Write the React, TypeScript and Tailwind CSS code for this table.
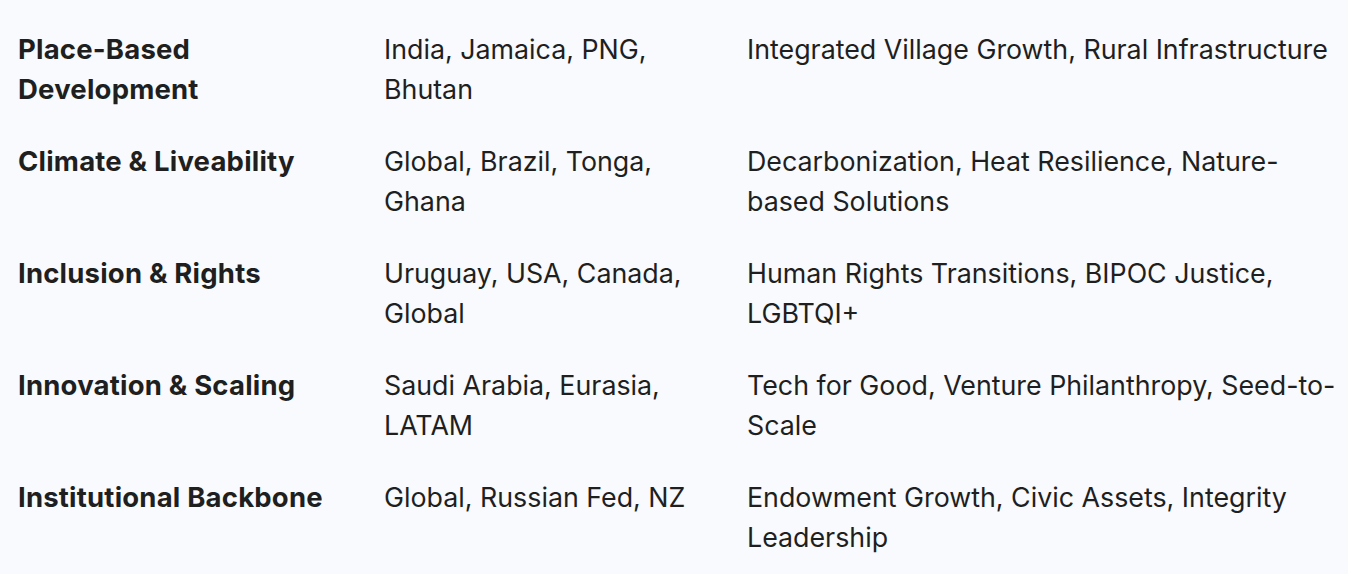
const rows = [
  {
    area: "Place-Based Development",
    regions: "India, Jamaica, PNG, Bhutan",
    focus: "Integrated Village Growth, Rural Infrastructure",
  },
  {
    area: "Climate & Liveability",
    regions: "Global, Brazil, Tonga, Ghana",
    focus: "Decarbonization, Heat Resilience, Nature-based Solutions",
  },
  {
    area: "Inclusion & Rights",
    regions: "Uruguay, USA, Canada, Global",
    focus: "Human Rights Transitions, BIPOC Justice, LGBTQI+",
  },
  {
    area: "Innovation & Scaling",
    regions: "Saudi Arabia, Eurasia, LATAM",
    focus: "Tech for Good, Venture Philanthropy, Seed-to-Scale",
  },
  {
    area: "Institutional Backbone",
    regions: "Global, Russian Fed, NZ",
    focus: "Endowment Growth, Civic Assets, Integrity Leadership",
  },
];

const App = () => {
  return (
    <div className="min-h-[574px] w-[1348px] overflow-hidden bg-[#f8fafd] pt-[13px] font-['Inter',sans-serif] text-[26.8px] leading-[40px] text-[#1f1f1f]">
      {rows.map((row) => (
        <div key={row.area} className="flex py-[16px]">
          <div className="w-[366px] shrink-0 pl-[18px] pr-[16px] text-[27.5px] font-bold tracking-[0.2px]">
            {row.area}
          </div>
          <div className="w-[363px] shrink-0 pl-[18px] pr-[16px]">{row.regions}</div>
          <div className="w-[619px] shrink-0 pl-[18px] pr-[6px]">{row.focus}</div>
        </div>
      ))}
    </div>
  );
};

export default App;
